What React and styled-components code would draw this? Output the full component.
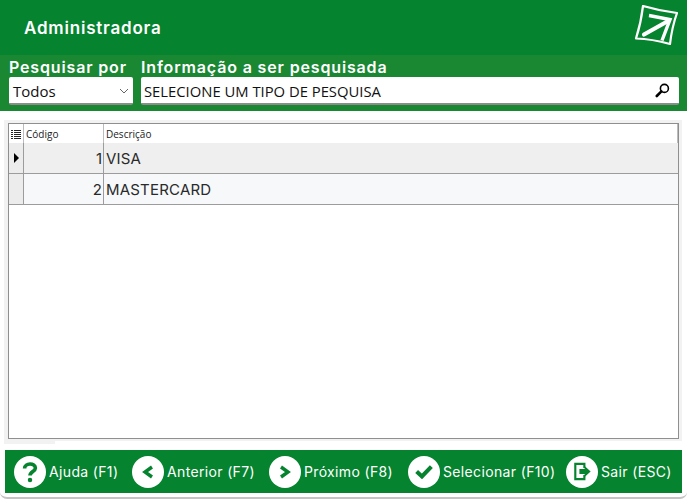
import styled, { createGlobalStyle } from 'styled-components';

const GlobalStyle = createGlobalStyle`
  html, body {
    margin: 0;
    padding: 0;
    background: #ffffff;
  }
  * {
    box-sizing: border-box;
  }
`;

const fontUi = `"Inter", "Lato", sans-serif`;
const fontField = `"Open Sans", "Noto Sans", sans-serif`;

const Window = styled.div`
  width: 687px;
  height: 499px;
  display: flex;
  flex-direction: column;
  overflow: hidden;
  border-bottom: 2px solid #c4c4c4;
  border-radius: 0 0 7px 7px;
  background: #ffffff;
  font-family: ${fontUi};
`;

const Header = styled.header`
  height: 55px;
  flex: none;
  display: flex;
  align-items: center;
  justify-content: space-between;
  padding: 0 7px 0 24px;
  background: #05832f;
`;

const Title = styled.h1`
  margin: 0;
  color: #ffffff;
  font-size: 17px;
  font-weight: 600;
  letter-spacing: 0.8px;
`;

const SearchBand = styled.div`
  height: 56px;
  flex: none;
  display: grid;
  grid-template-columns: 124px 538px;
  column-gap: 8px;
  padding: 2px 0 0 9px;
  background: #1a8733;
`;

const Field = styled.div`
  display: flex;
  flex-direction: column;
`;

const Label = styled.label`
  height: 20px;
  color: #ffffff;
  font-size: 16px;
  font-weight: 600;
  letter-spacing: 0.85px;
  line-height: 20px;
  white-space: nowrap;
`;

const InputBox = styled.div`
  height: 28px;
  display: flex;
  align-items: center;
  justify-content: space-between;
  padding: 1px ${(props) => props.$pad}px 0 ${(props) => props.$left}px;
  border-bottom: 2px solid #8c8c8c;
  border-radius: 2px;
  background: #ffffff;
  color: #111111;
  font-family: ${fontField};
  font-size: ${(props) => props.$size}px;
  white-space: nowrap;
`;

const Content = styled.main`
  flex: none;
  display: flex;
  flex-direction: column;
  padding: 9px 5px 0 4px;
`;

const GridFrame = styled.div`
  height: 321px;
  padding: 3px 3px 2px 4px;
  background: #f2f2f2;
`;

const FrameTab = styled.div`
  width: 51px;
  height: 3px;
  background: #f2f2f2;
`;

const Grid = styled.div`
  height: 316px;
  border: 1px solid #8f8f8f;
  background: #ffffff;
`;

const Row = styled.div`
  display: grid;
  grid-template-columns: 15px 80px 1fr;
  height: ${(props) => props.$height}px;
  border-bottom: ${(props) => (props.$ruled ? '1px solid #9c9c9c' : 'none')};
  background: ${(props) => props.$bg};
`;

const HeaderCell = styled.div`
  display: flex;
  align-items: center;
  padding-left: 2px;
  border-right: 1px solid #bcbcbc;
  color: #222222;
  font-family: ${fontField};
  font-size: 10px;
`;

const Indicator = styled.div`
  display: flex;
  align-items: center;
  justify-content: center;
  border-right: 1px solid #9c9c9c;
  background: #ececec;
`;

const Arrow = styled.span`
  width: 0;
  height: 0;
  border-top: 5px solid transparent;
  border-bottom: 5px solid transparent;
  border-left: 5px solid #000000;
`;

const NumberCell = styled.div`
  display: flex;
  align-items: center;
  justify-content: flex-end;
  padding-right: 1px;
  border-right: 1px solid #9c9c9c;
  color: #2a2a2a;
  font-size: 15px;
`;

const TextCell = styled.div`
  display: flex;
  align-items: center;
  padding-left: 2px;
  color: #2a2a2a;
  font-size: 15px;
  letter-spacing: 0.2px;
`;

const Toolbar = styled.footer`
  width: 677px;
  height: 43px;
  flex: none;
  display: flex;
  align-items: center;
  margin: 6px 0 0 5px;
  padding-left: 9px;
  background: #05832f;
`;

const ToolButton = styled.button`
  width: ${(props) => props.$width}px;
  flex: none;
  display: flex;
  align-items: center;
  gap: 3px;
  padding: 0;
  border: 0;
  background: none;
  color: #ffffff;
  font-family: ${fontUi};
  font-size: 14px;
  letter-spacing: 0.35px;
  white-space: nowrap;
`;

const Disc = styled.span`
  width: 32px;
  height: 32px;
  flex: none;
  display: flex;
  align-items: center;
  justify-content: center;
  border-radius: 50%;
  background: #ffffff;
`;

const Logo = () => (
  <svg width="46" height="46" viewBox="0 0 46 46" fill="none" stroke="#ffffff">
    <path d="M9 1 Q26 6 43 8 Q38 22 36 39 Q18 34 2 33.5 Q7 18 9 1 Z" strokeWidth="2.2" strokeLinejoin="round" />
    <path d="M15 10.5 L36 14.5 L28 35.5" strokeWidth="3.4" />
    <path d="M10 29.5 L35 15.5" strokeWidth="4.2" strokeLinecap="round" />
  </svg>
);

const Lens = () => (
  <svg width="15" height="15" viewBox="0 0 15 15" fill="none" stroke="#000000">
    <circle cx="9.4" cy="5.4" r="4" strokeWidth="1.6" />
    <path d="M6.4 8.4 L1.8 13" strokeWidth="2.6" strokeLinecap="round" />
  </svg>
);

const Chevron = () => (
  <svg width="10" height="6" viewBox="0 0 10 6" fill="none" stroke="#666666">
    <path d="M1 1 L5 5 L9 1" strokeWidth="1" />
  </svg>
);

const ListIcon = () => (
  <svg width="10" height="10" viewBox="0 0 10 10" fill="#222222">
    <path d="M0 1h2v1H0zM3 1h7v1H3zM0 3h2v1H0zM3 3h7v1H3zM0 5h2v1H0zM3 5h7v1H3zM0 7h2v1H0zM3 7h7v1H3zM0 9h2v1H0zM3 9h7v1H3z" />
  </svg>
);

const green = '#05832f';

const HelpIcon = () => (
  <svg width="18" height="24" viewBox="0 0 20 24" fill="none" stroke={green}>
    <path d="M4 8 C4 1.5 16 1.5 16 7.5 C16 11.5 10 11.5 10 16" strokeWidth="4" />
    <circle cx="10" cy="21" r="2.5" fill={green} stroke="none" />
  </svg>
);

const BackIcon = () => (
  <svg width="12" height="14" viewBox="0 0 12 14" fill="none" stroke={green}>
    <path d="M10 2 L3 7 L10 12" strokeWidth="3.4" />
  </svg>
);

const NextIcon = () => (
  <svg width="12" height="14" viewBox="0 0 12 14" fill="none" stroke={green}>
    <path d="M2 2 L9 7 L2 12" strokeWidth="3.4" />
  </svg>
);

const CheckIcon = () => (
  <svg width="18" height="15" viewBox="0 0 22 18" fill="none" stroke={green}>
    <path d="M2 9 L8.5 15 L20 3" strokeWidth="5" />
  </svg>
);

const ExitIcon = () => (
  <svg width="20" height="19" viewBox="0 0 22 22" fill={green}>
    <path d="M2 1 H15 V7 H12.5 V3.5 H4.5 V18.5 H12.5 V15 H15 V21 H2 Z" />
    <path d="M8 8 H14 V4.5 L21 11 L14 17.5 V14 H8 Z" />
  </svg>
);

const actions = [
  { label: 'Ajuda (F1)', icon: <HelpIcon />, width: 118 },
  { label: 'Anterior (F7)', icon: <BackIcon />, width: 137 },
  { label: 'Próximo (F8)', icon: <NextIcon />, width: 139 },
  { label: 'Selecionar (F10)', icon: <CheckIcon />, width: 158 },
  { label: 'Sair (ESC)', icon: <ExitIcon />, width: 106 },
];

const rows = [
  { code: 1, name: 'VISA', bg: '#efefef', current: true },
  { code: 2, name: 'MASTERCARD', bg: '#f6f8fa', current: false },
];

function App() {
  return (
    <Window>
      <GlobalStyle />
      <Header>
        <Title>Administradora</Title>
        <Logo />
      </Header>
      <SearchBand>
        <Field>
          <Label>Pesquisar por</Label>
          <InputBox $left={4} $pad={4} $size={15}>
            Todos
            <Chevron />
          </InputBox>
        </Field>
        <Field>
          <Label>Informação a ser pesquisada</Label>
          <InputBox $left={3} $pad={9} $size={14.8}>
            SELECIONE UM TIPO DE PESQUISA
            <Lens />
          </InputBox>
        </Field>
      </SearchBand>
      <Content>
        <GridFrame>
          <Grid>
            <Row $height={19} $bg="#ffffff">
              <HeaderCell>
                <ListIcon />
              </HeaderCell>
              <HeaderCell>Código</HeaderCell>
              <HeaderCell>Descrição</HeaderCell>
            </Row>
            {rows.map((row) => (
              <Row key={row.code} $height={31} $bg={row.bg} $ruled>
                <Indicator>{row.current && <Arrow />}</Indicator>
                <NumberCell>{row.code}</NumberCell>
                <TextCell>{row.name}</TextCell>
              </Row>
            ))}
          </Grid>
        </GridFrame>
        <FrameTab />
      </Content>
      <Toolbar>
        {actions.map((action) => (
          <ToolButton key={action.label} $width={action.width}>
            <Disc>{action.icon}</Disc>
            {action.label}
          </ToolButton>
        ))}
      </Toolbar>
    </Window>
  );
}

export default App;
